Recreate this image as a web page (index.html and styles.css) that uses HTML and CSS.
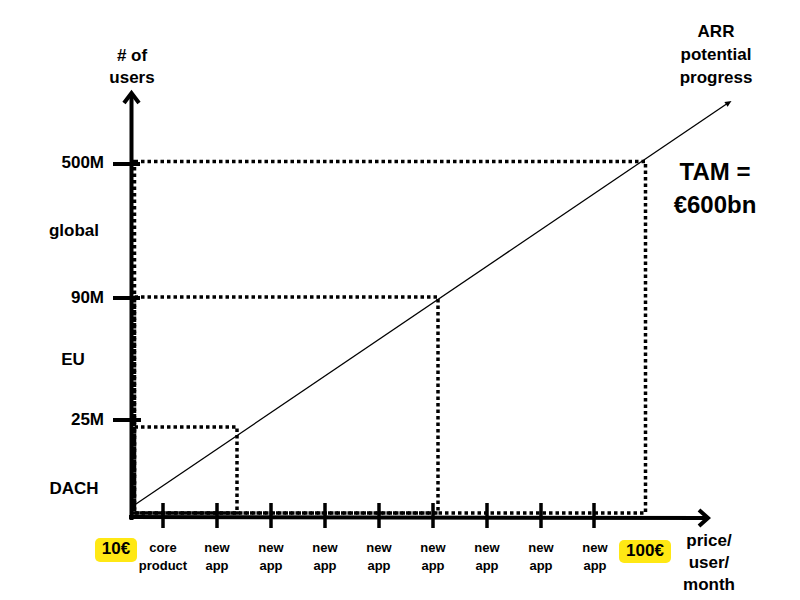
FILE: index.html
```html
<!DOCTYPE html>
<html lang="en">
<head>
<meta charset="utf-8">
<title>ARR potential progress</title>
<link rel="stylesheet" href="styles.css">
</head>
<body>
<div class="canvas">
  <svg class="chart" width="800" height="600" viewBox="0 0 800 600" xmlns="http://www.w3.org/2000/svg">
    <g class="dotted" fill="none" stroke="#000" stroke-width="3.5" stroke-dasharray="3.5 3">
      <rect x="134.5" y="161.5" width="511" height="351.5"/>
      <rect x="134.5" y="297" width="303.5" height="216"/>
      <rect x="134.5" y="427" width="102.5" height="86"/>
    </g>
    <g stroke="#000" fill="none" stroke-width="4">
      <line x1="131.5" y1="520" x2="131.5" y2="94"/>
      <polyline points="124,103 131.5,93 139,103"/>
      <line x1="129" y1="517" x2="707" y2="518"/>
      <polyline points="699,510 708,518 699,526"/>
      <line x1="113" y1="164" x2="140" y2="164"/>
      <line x1="113" y1="298" x2="140" y2="298"/>
      <line x1="113" y1="420" x2="141" y2="420"/>
    </g>
    <g stroke="#000" stroke-width="3.5">
      <line x1="163" y1="503" x2="163" y2="528"/>
      <line x1="217" y1="503" x2="217" y2="528"/>
      <line x1="271" y1="503" x2="271" y2="528"/>
      <line x1="325" y1="503" x2="325" y2="528"/>
      <line x1="379" y1="503" x2="379" y2="528"/>
      <line x1="433" y1="503" x2="433" y2="528"/>
      <line x1="487" y1="503" x2="487" y2="528"/>
      <line x1="541" y1="503" x2="541" y2="528"/>
      <line x1="594" y1="503" x2="594" y2="528"/>
    </g>
    <line x1="133" y1="506" x2="728" y2="103" stroke="#000" stroke-width="1.3"/>
    <polygon points="731.5,101 727.6,106.7 724.4,102" fill="#000"/>
  </svg>

  <div class="label axis-y-title">
    <div># of</div>
    <div>users</div>
  </div>

  <div class="label ytick t500">500M</div>
  <div class="label region r-global">global</div>
  <div class="label ytick t90">90M</div>
  <div class="label region r-eu">EU</div>
  <div class="label ytick t25">25M</div>
  <div class="label region r-dach">DACH</div>

  <div class="label arr-title">
    <div>ARR</div>
    <div>potential</div>
    <div>progress</div>
  </div>

  <div class="label tam">
    <div>TAM =</div>
    <div>€600bn</div>
  </div>

  <div class="label badge b10">10€</div>
  <div class="label badge b100">100€</div>

  <div class="label categories">
    <div class="cat">core<br>product</div>
    <div class="cat">new<br>app</div>
    <div class="cat">new<br>app</div>
    <div class="cat">new<br>app</div>
    <div class="cat">new<br>app</div>
    <div class="cat">new<br>app</div>
    <div class="cat">new<br>app</div>
    <div class="cat">new<br>app</div>
    <div class="cat">new<br>app</div>
  </div>

  <div class="label axis-x-title">
    <div>price/</div>
    <div>user/</div>
    <div>month</div>
  </div>
</div>
</body>
</html>
```

FILE: styles.css
```css
html, body {
  margin: 0;
  padding: 0;
  background: #ffffff;
}

body {
  font-family: "Liberation Sans", Arial, sans-serif;
  font-weight: bold;
  color: #000000;
}

.canvas {
  position: relative;
  width: 800px;
  height: 600px;
  overflow: hidden;
  background: #ffffff;
}

.chart {
  position: absolute;
  left: 0;
  top: 0;
  display: block;
}

.label {
  position: absolute;
  font-size: 17px;
  line-height: 20px;
  white-space: nowrap;
}

.axis-y-title {
  left: 82px;
  width: 100px;
  top: 45px;
  line-height: 22px;
  text-align: center;
}

.ytick {
  left: 0;
  width: 104px;
  text-align: right;
}

.t500 { top: 153px; }
.t90 { top: 288px; }
.t25 { top: 410px; }

.region {
  left: 24px;
  width: 100px;
  text-align: center;
}

.r-global { top: 221px; }
.r-eu { top: 350px; left: 23px; }
.r-dach { top: 479px; }

.arr-title {
  left: 666px;
  width: 100px;
  top: 20px;
  line-height: 23px;
  text-align: center;
}

.tam {
  left: 655px;
  width: 120px;
  top: 155px;
  font-size: 24px;
  line-height: 33px;
  text-align: center;
}

.badge {
  background: #ffe814;
  border-radius: 5px;
  line-height: 22px;
  padding: 0 0 2px;
  text-align: center;
}

.b10 {
  left: 95px;
  top: 538px;
  width: 42px;
}

.b100 {
  left: 619px;
  top: 540px;
  width: 52px;
  height: 22px;
  padding-bottom: 1px;
  line-height: 22px;
}

.categories {
  left: 136px;
  top: 539px;
  display: flex;
  font-size: 13px;
  line-height: 18px;
}

.cat {
  width: 54px;
  text-align: center;
}

.axis-x-title {
  left: 659px;
  width: 100px;
  top: 530px;
  line-height: 22px;
  text-align: center;
}
```
